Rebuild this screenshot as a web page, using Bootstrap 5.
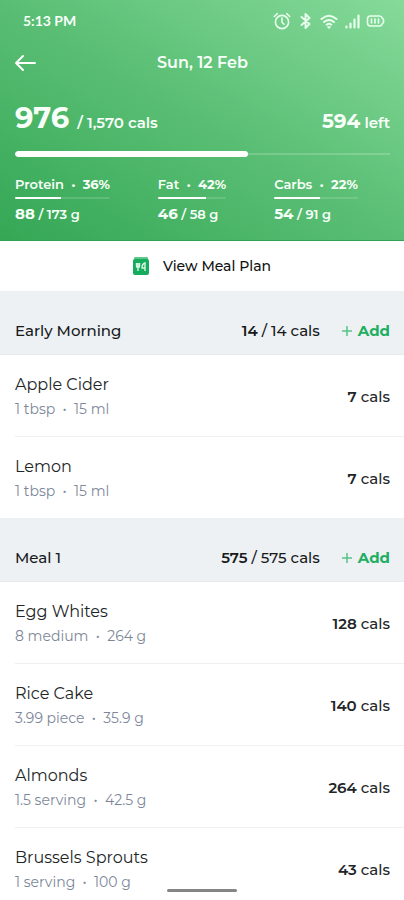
<!DOCTYPE html>
<html lang="en">
<head>
<meta charset="utf-8">
<meta name="viewport" content="width=device-width, initial-scale=1">
<title>Food diary</title>
<link href="https://cdn.jsdelivr.net/npm/bootstrap@5.3.0/dist/css/bootstrap.min.css" rel="stylesheet">
<style>
body{font-family:Montserrat,Inter,"Open Sans",sans-serif;font-size:15px;line-height:20px;color:#222527;background:#fff}
a,button{color:inherit}
.screen{overflow-y:auto;scrollbar-width:none}
.screen::-webkit-scrollbar{display:none}
.px-edge{padding-left:15px;padding-right:14px}
.summary{background:linear-gradient(to top right,#34a755 0%,#5bbf75 52%,#86da9a 100%);color:#f8fff9;border-bottom:1px solid #2fa256;padding-bottom:17px}
.status{padding:11px 19px 0 23px;font-family:Lato,sans-serif;font-size:14px;font-weight:700}
.topbar{display:grid;grid-template-columns:1fr auto 1fr;margin-top:22px;font-size:16px;font-weight:600}
.totals{margin-top:28px;font-size:15px;font-weight:600;line-height:34px}
.eaten{font-size:29px;font-weight:700}
.left-num{font-size:20px;font-weight:700}
.bar-main{height:6px;margin-top:11px;background:linear-gradient(#0000 2px,#ffffff2e 2px 4px,#0000 4px);border-radius:3px}
.bar-main .progress-bar{border-radius:3px}
.bar-thin{height:2px;margin:4px 0 6px;background:#ffffff26;border-radius:1px}
.progress-bar{background:#fff}
.macros{gap:48px;margin-top:18px;font-size:13px;line-height:18px;font-weight:600}
.macros b{font-weight:700}
.macros .amount{font-size:15px}
.plan{height:50px;gap:14px;font-size:14px;font-weight:500;color:#111}
.meal-head{background:#edf1f4;height:64px;padding-top:16px;color:#17191b;border-bottom:1px solid #e6eaee}
.head-name{font-size:15px;line-height:20px;font-weight:500}
.add{color:#1fae62;font-size:15px;line-height:20px;font-weight:700;margin-left:22px;gap:6px}
.food{margin-left:15px;padding-right:14px;padding-top:2px;height:81px}
.food + .food{height:82px;border-top:1px solid #eef0f2}
.food-name{font-size:16px;line-height:24px}
.food-info{font-size:14px;line-height:24px;color:#7d8799}
.cals{font-size:15px;font-weight:500}
.cals b{font-weight:600}
.home{width:70px;height:3px;border-radius:2px;background:#858585;bottom:8px}
</style>
<script src="https://cdn.jsdelivr.net/npm/bootstrap@5.3.0/dist/js/bootstrap.bundle.min.js"></script>
</head>
<body>
<div class="screen vh-100">
<header class="summary">
  <div class="status d-flex justify-content-between align-items-center">
    <span>5:13 PM</span>
    <svg width="112" height="18" viewBox="0 0 112 18" fill="none" stroke="#e9ffee" stroke-width="1.6" stroke-linecap="round" stroke-linejoin="round" aria-hidden="true">
      <circle cx="9" cy="10" r="6.6"/><path d="M9 6v4.200l2 2M1.300 4.500l3-2.800M16.700 4.500l-3-2.800"/>
      <path d="M28.500 5l8 7-4 4V2l4 4-8 7" stroke-width="1.900"/>
      <path d="M48.500 7q7.500-6.500 15 0M51 10q5-4 10 0M53.700 12.700q2.300-1.700 4.600 0" stroke-width="2"/><path d="M55 15h2l-1 1z"/>
      <path d="M73.500 14.500v1M77.500 11.500v4M81.500 7.500v8M85.500 3.500v12" stroke-width="2.200"/>
      <path d="M97.500 4h9q2 0 2.700 2l1.300 1.500v3L109.200 12q-.7 2-2.700 2h-9q-3 0-3-3V7q0-3 3-3z"/><path d="M98.500 7v4M102 7v4M105.500 7v4"/>
    </svg>
  </div>
  <div class="topbar px-edge align-items-center">
    <a href="#" class="d-flex" aria-label="Back"><svg width="22" height="18" viewBox="0 0 22 18" fill="none" stroke="#fff" stroke-width="1.9" stroke-linecap="round" stroke-linejoin="round"><path d="M20 9H1M8 2L1 9l7 7"/></svg></a>
    <span>Sun, 12 Feb</span>
  </div>
  <div class="px-edge">
    <div class="totals d-flex justify-content-between align-items-baseline">
      <div class="d-flex align-items-baseline gap-2"><span class="eaten">976</span><span>/ 1,570 cals</span></div>
      <div><span class="left-num">594</span> left</div>
    </div>
    <div class="progress bar-main" role="progressbar" aria-label="Calories" aria-valuenow="62" aria-valuemin="0" aria-valuemax="100"><div class="progress-bar" style="width:62%"></div></div>
    <div class="macros d-flex">
      <div><div>Protein &nbsp;•&nbsp; <b>36%</b></div><div class="progress bar-thin"><div class="progress-bar" style="width:48%"></div></div><div><b class="amount">88</b> / 173 g</div></div>
      <div><div>Fat &nbsp;•&nbsp; <b>42%</b></div><div class="progress bar-thin"><div class="progress-bar" style="width:70%"></div></div><div><b class="amount">46</b> / 58 g</div></div>
      <div><div>Carbs &nbsp;•&nbsp; <b>22%</b></div><div class="progress bar-thin"><div class="progress-bar" style="width:55%"></div></div><div><b class="amount">54</b> / 91 g</div></div>
    </div>
  </div>
</header>
<main>
  <button type="button" class="plan btn rounded-0 border-0 w-100 p-0 d-flex align-items-center justify-content-center">
    <svg width="16" height="20" viewBox="0 0 16 20" aria-hidden="true"><path d="M2 1h12q1 0 1 1v2H1V2q0-1 1-1z" fill="#5fc98b"/><rect y="3" width="16" height="16" rx="2" fill="#16ab5d"/><path d="M3.500 7v3q0 1.500 1.500 1.500T6.500 10V7M5 7v8M12 15V7q-3 1-3 5h3" fill="none" stroke="#d8f7e5" stroke-width="1.400"/></svg>
    View Meal Plan
  </button>
  <section>
    <div class="meal-head px-edge d-flex align-items-center"><h2 class="head-name mb-0 me-auto">Early Morning</h2><span class="cals"><b>14</b> / 14 cals</span><button type="button" class="add btn border-0 p-0 d-flex align-items-center"><svg width="10" height="10" viewBox="0 0 10 10" stroke="#58c288" stroke-width="1.500"><path d="M5 0v10M0 5h10"/></svg>Add</button></div>
    <div class="food d-flex justify-content-between align-items-center"><div><div class="food-name">Apple Cider</div><div class="food-info">1 tbsp &nbsp;•&nbsp; 15 ml</div></div><span class="cals"><b>7</b> cals</span></div>
    <div class="food d-flex justify-content-between align-items-center"><div><div class="food-name">Lemon</div><div class="food-info">1 tbsp &nbsp;•&nbsp; 15 ml</div></div><span class="cals"><b>7</b> cals</span></div>
  </section>
  <section>
    <div class="meal-head px-edge d-flex align-items-center"><h2 class="head-name mb-0 me-auto">Meal 1</h2><span class="cals"><b>575</b> / 575 cals</span><button type="button" class="add btn border-0 p-0 d-flex align-items-center"><svg width="10" height="10" viewBox="0 0 10 10" stroke="#58c288" stroke-width="1.500"><path d="M5 0v10M0 5h10"/></svg>Add</button></div>
    <div class="food d-flex justify-content-between align-items-center"><div><div class="food-name">Egg Whites</div><div class="food-info">8 medium &nbsp;•&nbsp; 264 g</div></div><span class="cals"><b>128</b> cals</span></div>
    <div class="food d-flex justify-content-between align-items-center"><div><div class="food-name">Rice Cake</div><div class="food-info">3.99 piece &nbsp;•&nbsp; 35.9 g</div></div><span class="cals"><b>140</b> cals</span></div>
    <div class="food d-flex justify-content-between align-items-center"><div><div class="food-name">Almonds</div><div class="food-info">1.5 serving &nbsp;•&nbsp; 42.5 g</div></div><span class="cals"><b>264</b> cals</span></div>
    <div class="food d-flex justify-content-between align-items-center"><div><div class="food-name">Brussels Sprouts</div><div class="food-info">1 serving &nbsp;•&nbsp; 100 g</div></div><span class="cals"><b>43</b> cals</span></div>
  </section>
</main>
</div>
<div class="home position-fixed start-50 translate-middle-x"></div>
</body>
</html>
